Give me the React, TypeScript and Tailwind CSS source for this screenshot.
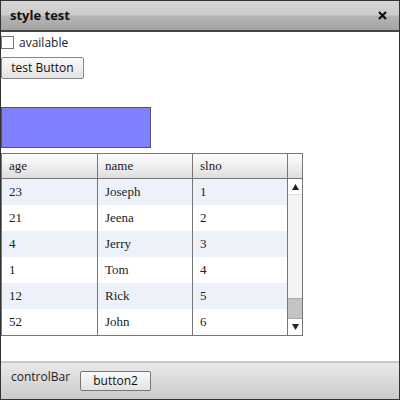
const rows = [
  { age: '23', name: 'Joseph', slno: '1' },
  { age: '21', name: 'Jeena', slno: '2' },
  { age: '4', name: 'Jerry', slno: '3' },
  { age: '1', name: 'Tom', slno: '4' },
  { age: '12', name: 'Rick', slno: '5' },
  { age: '52', name: 'John', slno: '6' },
]

const sans = { fontFamily: '"Open Sans", "DejaVu Sans", sans-serif' }

function Cell({ children, last }: { children: React.ReactNode; last?: boolean }) {
  return (
    <div className={`flex items-center pl-[7px] ${last ? '' : 'border-r border-[#777]'}`}>
      {children}
    </div>
  )
}

function Scrollbar() {
  return (
    <div className="flex flex-col w-[14px] h-full bg-[#f4f4f4]">
      <div className="h-[16px] flex items-center justify-center bg-white border-b border-[#e0e0e0]">
        <svg width="7" height="6" viewBox="0 0 7 6">
          <path d="M3.5 0 L7 6 L0 6 Z" fill="#222" />
        </svg>
      </div>
      <div className="flex-1" />
      <div className="h-[21px] bg-[#c4c4c4] border-y border-[#aaa]" />
      <div className="h-[16px] flex items-center justify-center bg-white">
        <svg width="7" height="6" viewBox="0 0 7 6">
          <path d="M0 0 L7 0 L3.5 6 Z" fill="#222" />
        </svg>
      </div>
    </div>
  )
}

export default function App() {
  return (
    <div className="w-[400px] h-[400px] border border-[#333] flex flex-col bg-white" style={sans}>
      <div className="h-[31px] flex items-center justify-between px-[9px] border-b-2 border-[#444] bg-[linear-gradient(to_bottom,#d6d6d6_0%,#cccccc_48%,#b4b4b4_52%,#a4a4a4_100%)]">
        <span className="text-[13px] font-bold text-[#111]">style test</span>
        <svg width="9" height="9" viewBox="0 0 9 9" className="mr-[3px]">
          <path d="M1 1 L8 8 M8 1 L1 8" stroke="#111" strokeWidth="2.2" />
        </svg>
      </div>

      <div className="flex-1 flex flex-col">
        <label className="flex items-center mt-[4px] h-[13px] gap-[5px]">
          <span className="w-[13px] h-[13px] border border-[#777] bg-white" />
          <span className="text-[12px] text-[#222]">available</span>
        </label>
        <button className="mt-[8px] w-[83px] h-[22px] border border-[#888] rounded-[2px] text-[12px] text-[#111] bg-[linear-gradient(to_bottom,#fafafa,#e2e2e2)]">
          test Button
        </button>

        <div className="mt-[28px] w-[150px] h-[41px] bg-[#8080ff] border border-[#555]" />

        <div className="mt-[5px] w-[302px] h-[183px] border border-[#777] flex flex-col text-[13px] text-[#222]" style={{ fontFamily: '"Liberation Serif", serif' }}>
          <div className="h-[27px] grid grid-cols-[96px_95px_95px_14px] border-b border-[#777] bg-[linear-gradient(to_bottom,#ffffff,#dedede)]">
            <Cell>age</Cell>
            <Cell>name</Cell>
            <Cell>slno</Cell>
            <div />
          </div>
          <div className="flex-1 flex">
            <div className="w-[285px] flex flex-col">
              {rows.map((r, i) => (
                <div key={i} className={`h-[26px] grid grid-cols-[96px_95px_94px] ${i % 2 === 0 ? 'bg-[#edf2fa]' : 'bg-white'}`}>
                  <Cell>{r.age}</Cell>
                  <Cell>{r.name}</Cell>
                  <Cell last>{r.slno}</Cell>
                </div>
              ))}
            </div>
            <div className="border-l border-[#777]">
              <Scrollbar />
            </div>
          </div>
        </div>
      </div>

      <div className="h-[38px] border-t-2 border-[#c8c8c8] flex items-start gap-[10px] pl-[10px] pt-[5px] bg-[linear-gradient(to_bottom,#e9e9e9,#cbcbcb)]">
        <span className="text-[12px] text-[#222]">controlBar</span>
        <button className="mt-[3px] w-[71px] h-[20px] border border-[#777] rounded-[2px] text-[12px] text-[#111] bg-[linear-gradient(to_bottom,#fafafa,#e2e2e2)]">
          button2
        </button>
      </div>
    </div>
  )
}
